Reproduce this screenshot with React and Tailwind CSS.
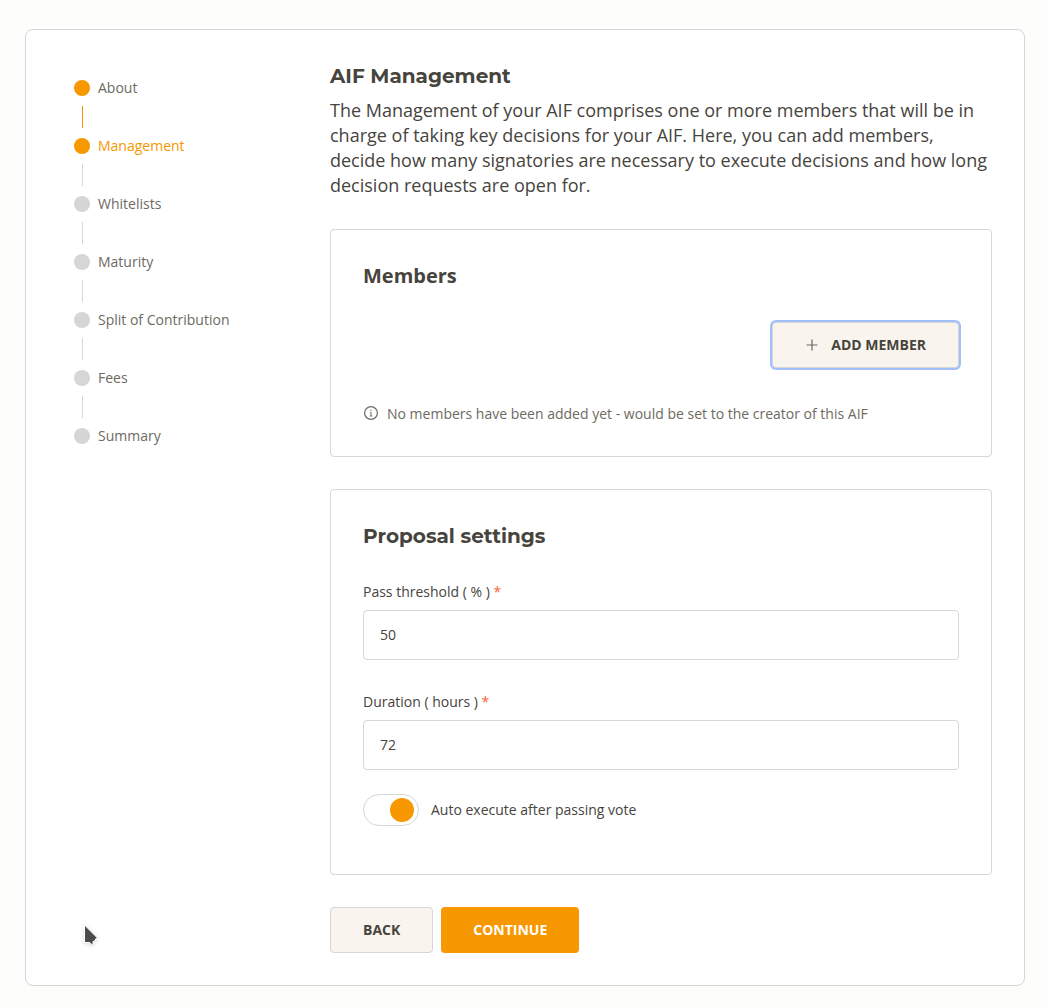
import { useState } from "react";

const steps = [
  { name: "About", done: true },
  { name: "Management", done: true, current: true },
  { name: "Whitelists" },
  { name: "Maturity" },
  { name: "Split of Contribution" },
  { name: "Fees" },
  { name: "Summary" },
];

const headingFont = "font-['Montserrat','Inter',sans-serif]";

function Steps() {
  return (
    <nav aria-label="Progress" className="w-[272px] shrink-0 pt-4 pl-4">
      <ol>
        {steps.map((step, i) => (
          <li key={step.name}>
            {i > 0 && (
              <div className={`my-2 ml-2 h-[22px] w-px ${i === 1 ? "bg-[#f79800]" : "bg-[#d6d6d6]"}`} />
            )}
            <a
              href="#"
              aria-current={step.current ? "step" : undefined}
              className={`flex h-5 items-center gap-2 ${step.current ? "text-[#f79800]" : "text-[#6d6a61]"}`}
            >
              <span className={`size-4 rounded-full ${step.done ? "bg-[#f79800]" : "bg-[#d6d6d6]"}`} />
              {step.name}
            </a>
          </li>
        ))}
      </ol>
    </nav>
  );
}

function Field({ id, label, value, onChange }) {
  return (
    <div className="mt-8">
      <label htmlFor={id} className="block">
        {label} <span className="text-[#f96332]">*</span>
      </label>
      <input
        id={id}
        type="text"
        inputMode="numeric"
        value={value}
        onChange={(e) => onChange(e.target.value)}
        className="mt-2 block h-[50px] w-full rounded border border-[#d6d6d6] bg-white px-4 pb-0.5"
      />
    </div>
  );
}

export default function App() {
  const [threshold, setThreshold] = useState("50");
  const [duration, setDuration] = useState("72");
  const [auto, setAuto] = useState(true);

  return (
    <div className="relative min-h-screen bg-[#fdfdfb] pt-[29px] pr-[23px] pb-[21px] pl-[25px] font-['Open_Sans',sans-serif] text-sm leading-5 text-[#46443d]">
      <div className="flex rounded-lg border border-[#d6d6d6] bg-white p-8">
        <Steps />
        <main className="min-w-0 flex-1">
          <h1 className={`${headingFont} text-xl leading-7 font-bold`}>AIF Management</h1>
          <p className="mt-2 text-lg leading-[25px]">
            The Management of your AIF comprises one or more members that will be in charge of taking key
            decisions for your AIF. Here, you can add members, decide how many signatories are necessary to
            execute decisions and how long decision requests are open for.
          </p>

          <section className="mt-[31px] rounded border border-[#d6d6d6] p-8">
            <h2 className="text-xl leading-7 font-bold">Members</h2>
            <div className="mt-8 flex justify-end">
              <button
                type="button"
                className="flex h-[46px] items-center gap-3 rounded border border-[#d6d6d6] bg-[#f9f4ed] px-8 font-bold ring-2 ring-[#a0bffb]"
              >
                <svg viewBox="0 0 14 14" className="size-3.5" fill="none" stroke="#6d6a61" strokeWidth="1.2" aria-hidden="true">
                  <path d="M7 1.500v11M1.500 7h11" />
                </svg>
                ADD MEMBER
              </button>
            </div>
            <p className="mt-9 flex items-center gap-2 text-[#6d6a61]">
              <svg viewBox="0 0 16 16" className="size-4" fill="none" stroke="currentColor" aria-hidden="true">
                <circle cx="8" cy="7" r="6.4" strokeWidth="1.2" />
                <path d="M7.200 6.500h.8v3.500M6.800 10h2.400M8 3.800v1.300" strokeWidth="1" />
              </svg>
              No members have been added yet - would be set to the creator of this AIF
            </p>
          </section>

          <section className="mt-8 rounded border border-[#d6d6d6] p-8">
            <h2 className={`${headingFont} text-xl leading-7 font-bold`}>Proposal settings</h2>
            <Field id="threshold" label="Pass threshold ( % )" value={threshold} onChange={setThreshold} />
            <Field id="duration" label="Duration ( hours )" value={duration} onChange={setDuration} />
            <label className="mt-6 mb-4 flex w-fit cursor-pointer items-center gap-3">
              <input
                type="checkbox"
                role="switch"
                checked={auto}
                onChange={(e) => setAuto(e.target.checked)}
                className="h-8 w-14 cursor-pointer appearance-none rounded-full border border-[#d6d6d6] bg-white px-1 py-[3px] before:block before:size-6 before:rounded-full before:bg-[#d6d6d6] checked:before:ml-auto checked:before:bg-[#f79800]"
              />
              Auto execute after passing vote
            </label>
          </section>

          <div className="mt-8 flex gap-2">
            <button type="button" className="h-[46px] rounded border border-[#d6d6d6] bg-[#f9f4ed] px-8 font-bold">
              BACK
            </button>
            <button type="button" className="h-[46px] rounded bg-[#f79800] px-8 font-bold text-white">
              CONTINUE
            </button>
          </div>
        </main>
      </div>

      {/* Mouse pointer */}
      <svg
        viewBox="0 0 16 24"
        className="pointer-events-none absolute top-[924px] left-[83px] h-6 w-4 drop-shadow-sm"
        aria-hidden="true"
      >
        <path d="M1.500 1v17.500h5l3.500 3V17.500h1l3-4z" fill="#4b4b4b" stroke="#fff" strokeWidth="1" />
      </svg>
    </div>
  );
}
